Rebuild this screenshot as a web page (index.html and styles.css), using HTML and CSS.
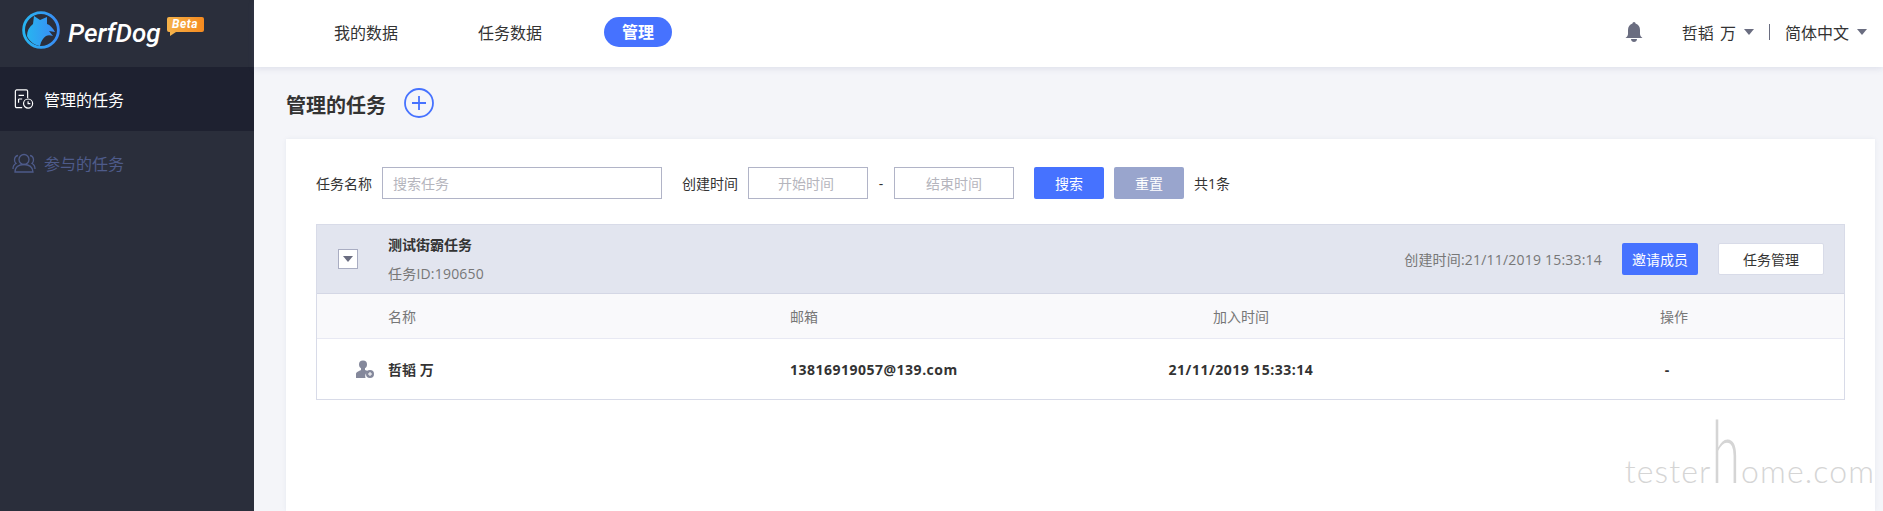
FILE: index.html
```html
<!DOCTYPE html>
<html lang="zh-CN">
<head>
    <meta charset="UTF-8">
    <meta name="viewport" content="width=device-width, initial-scale=1.0">
    <title>PerfDog - 管理的任务</title>
    <link rel="stylesheet" href="styles.css">
</head>
<body>
    <div class="app">

        <!-- Sidebar -->
        <aside class="sidebar">
            <div class="logo">
                <svg class="logo-mark" viewBox="0 0 38 38">
                    <defs>
                        <linearGradient id="dogBlue" x1="0" y1="0" x2="1" y2="0">
                            <stop offset="0" stop-color="#27b4f0"/>
                            <stop offset="1" stop-color="#3a8cf5"/>
                        </linearGradient>
                    </defs>
                    <circle cx="19" cy="19" r="17.4" fill="none" stroke="url(#dogBlue)" stroke-width="2.8"/>
                    <path fill="url(#dogBlue)" d="M5 25 C5 20 7 16 11 13 L12 5 L18 9 L25 6 L25 13 C28 14 31 17 33 21 L27 20 L31 25 C28 24 26 24 24 25 C21 27 19 30 18 35 C12 34 7 30 5 25 Z"/>
                </svg>
                <span class="logo-text">PerfDog</span>
                <span class="logo-beta">Beta</span>
            </div>
            <a class="side-item active" href="#">
                <svg class="side-icon" viewBox="0 0 22 22" fill="none" stroke="currentColor" stroke-width="1.3">
                    <path d="M9 20.500 H3 a1.500 1.500 0 0 1 -1.500 -1.500 V2.500 A1.500 1.500 0 0 1 3 1 H13.500 A1.500 1.500 0 0 1 15 2.500 V10"/>
                    <path d="M5 7 H11 M5 11 H9 M5 11 V15"/>
                    <circle cx="15.500" cy="16" r="5"/>
                    <path d="M15.500 13.500 V16 H18"/>
                </svg>
                <span>管理的任务</span>
            </a>
            <a class="side-item" href="#">
                <svg class="side-icon wide" viewBox="0 0 24 20" fill="none" stroke="currentColor" stroke-width="1.300">
                    <circle cx="12" cy="6.500" r="5"/>
                    <path d="M3 19 C3 14 7 11.500 12 11.500 C17 11.500 21 14 21 19 Z"/>
                    <path d="M6 2.500 C3.500 3 2.500 5 2.500 7 C2.500 8.500 3 9.500 4 10.500 C2 11.500 1 13.500 1 16"/>
                    <path d="M18 2.500 C20.500 3 21.500 5 21.500 7 C21.500 8.500 21 9.500 20 10.500 C22 11.500 23 13.500 23 16"/>
                </svg>
                <span>参与的任务</span>
            </a>
        </aside>

        <div class="main">

            <!-- Top bar -->
            <header class="topbar">
                <nav class="top-nav">
                    <a href="#">我的数据</a>
                    <a href="#">任务数据</a>
                    <a href="#" class="current">管理</a>
                </nav>
                <div class="top-right">
                    <svg class="bell" viewBox="0 0 18 20">
                        <path d="M9 0 C10 0 10.500 .8 10.500 1.600 C13.500 2.400 15 5 15 8 V12 C15 14 16.500 15 17.500 16 H.5 C1.500 15 3 14 3 12 V8 C3 5 4.500 2.400 7.500 1.600 C7.500 .8 8 0 9 0 Z"/>
                        <path d="M6 17 H12 C12 18.800 10.500 20 9 20 C7.500 20 6 18.800 6 17 Z"/>
                    </svg>
                    <span class="drop user">哲韬 万<i class="caret"></i></span>
                    <span class="divider"></span>
                    <span class="drop">简体中文<i class="caret"></i></span>
                </div>
            </header>

            <section class="content">
                <div class="page-title">
                    <h1>管理的任务</h1>
                    <svg class="add-btn" viewBox="0 0 30 30" fill="none" stroke="#4672ff" stroke-width="1.800">
                        <circle cx="15" cy="15" r="14"/>
                        <path d="M15 8 V22 M8 15 H22"/>
                    </svg>
                </div>

                <div class="card">
                    <!-- Filters -->
                    <div class="filters">
                        <label>任务名称</label>
                        <input class="input name-input" type="text" placeholder="搜索任务">
                        <label class="time-label">创建时间</label>
                        <input class="input date-input date-start" type="text" placeholder="开始时间">
                        <span class="dash">-</span>
                        <input class="input date-input" type="text" placeholder="结束时间">
                        <button class="btn btn-blue search-btn">搜索</button>
                        <button class="btn btn-grey">重置</button>
                        <span class="count">共1条</span>
                    </div>

                    <!-- Task -->
                    <div class="task">
                        <div class="task-head">
                            <span class="toggle"><i class="caret"></i></span>
                            <div class="task-info">
                                <strong>测试街霸任务</strong>
                                <span class="task-id">任务ID:190650</span>
                            </div>
                            <span class="task-time">创建时间:21/11/2019 15:33:14</span>
                            <button class="btn btn-blue invite-btn">邀请成员</button>
                            <button class="btn btn-white">任务管理</button>
                        </div>
                        <div class="member-row member-head">
                            <span>名称</span>
                            <span>邮箱</span>
                            <span class="center">加入时间</span>
                            <span class="center op">操作</span>
                        </div>
                        <div class="member-row member-body">
                            <span class="member-name">
                                <svg class="member-icon" viewBox="0 0 18 18">
                                    <circle cx="7" cy="4.500" r="4"/>
                                    <path d="M5 8 H9 V10 C11 10.500 12 11 12.500 11.500 A5 5 0 0 0 9.500 18 H0 V14 C0 12 3 11 5 10 Z"/>
                                    <circle cx="14" cy="14" r="4"/>
                                    <path d="M12 14 H16 M14 12 V16" stroke="#fff" stroke-width="1"/>
                                </svg>
                                哲韬 万
                            </span>
                            <span class="wide-text">13816919057@139.com</span>
                            <span class="center wide-text">21/11/2019 15:33:14</span>
                            <span class="center op">-</span>
                        </div>
                    </div>

                    <div class="watermark">tester<span>h</span>ome.com</div>
                </div>
            </section>
        </div>
    </div>
</body>
</html>
```
FILE: styles.css
```css
/* General */
* {
    box-sizing: border-box;
}
html, body {
    height: 100%;
}
body {
    margin: 0;
    overflow: hidden;
    font-family: "Open Sans", "Noto Sans CJK SC", sans-serif;
    font-size: 14px;
    color: #333;
    background: #f4f5f9;
}
a {
    text-decoration: none;
    color: inherit;
}
.app {
    display: flex;
    height: 100%;
}

/* Sidebar */
.sidebar {
    flex: 0 0 254px;
    background: #2a2e3b;
}
.logo {
    display: flex;
    align-items: flex-start;
    height: 67px;
    padding: 11px 0 0 22px;
}
.logo-mark {
    flex: none;
    width: 38px;
    height: 38px;
}
.logo-text {
    margin: 7px 0 0 8px;
    font-family: Roboto, sans-serif;
    font-size: 26px;
    line-height: 30px;
    font-style: italic;
    font-weight: 500;
    color: #fff;
}
.logo-beta {
    position: relative;
    margin: 6px 0 0 6px;
    width: 37px;
    height: 15px;
    background: linear-gradient(90deg, #f5b24a, #f58a1f);
    border-radius: 2px;
    font-family: Roboto, sans-serif;
    font-size: 12px;
    line-height: 15px;
    font-style: italic;
    font-weight: 700;
    letter-spacing: .5px;
    text-align: center;
    color: #fff;
}
/* speech bubble tail */
.logo-beta::after {
    content: '';
    position: absolute;
    left: 3px;
    top: 15px;
    border-top: 4px solid #f5b24a;
    border-right: 6px solid transparent;
}
.side-item {
    display: flex;
    align-items: center;
    height: 64px;
    padding-left: 14px;
    font-size: 16px;
    color: #4e5b8a;
}
.side-item.active {
    background: #1e2130;
    color: #fff;
}
.side-icon {
    flex: none;
    width: 20px;
    height: 20px;
    margin-right: 10px;
}
.side-icon.wide {
    width: 24px;
    margin-left: -2px;
    margin-right: 8px;
}

/* Top bar */
.main {
    flex: 1;
    display: flex;
    flex-direction: column;
    min-width: 0;
}
.topbar {
    display: flex;
    justify-content: space-between;
    align-items: center;
    flex: none;
    height: 67px;
    padding: 0 16px 3px 80px;
    background: #fff;
    box-shadow: 0 2px 6px rgba(120, 125, 170, .16);
}
.top-nav {
    display: flex;
    align-items: center;
    gap: 80px;
    font-size: 16px;
    color: #333;
}
.top-nav .current {
    width: 68px;
    height: 30px;
    margin-left: -18px;
    background: #4672ff;
    border-radius: 15px;
    line-height: 30px;
    text-align: center;
    font-weight: 700;
    color: #fff;
}
.top-right {
    display: flex;
    align-items: center;
    font-size: 16px;
}
.bell {
    width: 18px;
    height: 20px;
    margin-right: 39px;
    fill: #6a6d80;
}
.drop {
    display: flex;
    align-items: center;
}
.user {
    word-spacing: 2px;
}
.caret {
    display: inline-block;
    width: 0;
    height: 0;
    border-left: 5px solid transparent;
    border-right: 5px solid transparent;
    border-top: 6px solid #6a6d80;
}
.drop .caret {
    margin-left: 8px;
}
.divider {
    width: 1px;
    height: 16px;
    margin: 0 15px;
    background: #6a6d80;
}

/* Content */
.content {
    flex: 1;
    display: flex;
    flex-direction: column;
    min-height: 0;
    padding: 0 8px 0 32px;
}
.page-title {
    display: flex;
    align-items: center;
    flex: none;
    height: 72px;
}
.page-title h1 {
    margin: 2px 18px 0 0;
    font-size: 20px;
    font-weight: 700;
    color: #333;
}
.add-btn {
    width: 30px;
    height: 30px;
}
.card {
    position: relative;
    flex: 1;
    overflow: hidden;
    padding: 28px 30px 0;
    background: #fff;
    box-shadow: 0 0 4px rgba(120, 125, 170, .1);
}

/* Filters */
.filters {
    display: flex;
    align-items: center;
    height: 32px;
}
.filters label {
    margin-right: 10px;
}
.filters .time-label {
    margin-left: 20px;
}
.input {
    height: 32px;
    padding: 0 10px;
    border: 1px solid #b1b4c7;
    border-radius: 0;
    outline: none;
    font: inherit;
    color: #333;
    background: #fff;
}
.input::placeholder {
    color: #b5b5bd;
}
.name-input {
    width: 280px;
}
.date-input {
    width: 120px;
    text-align: center;
}
.date-start {
    padding-right: 14px;
}
.dash {
    width: 26px;
    text-align: center;
}
.btn {
    height: 32px;
    padding: 0;
    border: none;
    border-radius: 2px;
    font: inherit;
    color: #fff;
}
.btn-blue {
    background: #4672ff;
}
.btn-grey {
    width: 70px;
    margin-left: 10px;
    background: #99a5cd;
}
.search-btn {
    width: 70px;
    margin-left: 20px;
}
.count {
    margin-left: 10px;
}

/* Task box */
.task {
    margin-top: 25px;
    border: 1px solid #d8dbe8;
    border-top: none;
}
.task-head {
    display: flex;
    align-items: center;
    height: 70px;
    padding: 0 20px 0 21px;
    background: #e2e5ef;
    border-top: 1px solid #d8dbe8;
    border-bottom: 1px solid #d4d7e5;
}
.toggle {
    display: flex;
    align-items: center;
    justify-content: center;
    width: 20px;
    height: 20px;
    background: #fff;
    border: 1px solid #a9adc2;
}
.task-info {
    display: flex;
    flex-direction: column;
    gap: 8px;
    flex: 1;
    margin-left: 30px;
    color: #777;
    line-height: 21px;
}
.task-info strong {
    color: #333;
}
.task-id {
    letter-spacing: .2px;
}
.task-time {
    color: #777;
    letter-spacing: .2px;
}
.invite-btn {
    width: 76px;
    margin-left: 20px;
}
.btn-white {
    width: 106px;
    height: 32px;
    margin-left: 20px;
    background: #fff;
    border: 1px solid #d8dbe8;
    color: #333;
}

/* Members */
.member-row {
    display: grid;
    grid-template-columns: 402px 351px 200px 233px 200px;
    align-items: center;
    padding-left: 71px;
}
.center {
    text-align: center;
}
.op {
    grid-column: 5;
}
.member-head {
    height: 45px;
    background: #f9f9fb;
    border-bottom: 1px solid #e8e9f3;
    color: #777;
}
.member-body {
    height: 60px;
    font-weight: 700;
    color: #333;
}
.member-body .op {
    padding-right: 14px;
}
.wide-text {
    letter-spacing: .5px;
}
.member-name {
    position: relative;
}
.member-icon {
    position: absolute;
    left: -32px;
    top: 1px;
    width: 18px;
    height: 18px;
    fill: #84889b;
}

/* Watermark */
.watermark {
    position: absolute;
    right: 0;
    bottom: 22px;
    font-family: Lato, sans-serif;
    font-size: 32px;
    font-weight: 300;
    letter-spacing: 1.100px;
    line-height: 36px;
    white-space: nowrap;
    color: #d5d5d5;
}
/* tall looped h of the handwritten mark */
.watermark span {
    display: inline-block;
    font-size: 52px;
    font-weight: 300;
    line-height: 36px;
    transform: scaleY(1.650);
    transform-origin: 0 38px;
}
```
